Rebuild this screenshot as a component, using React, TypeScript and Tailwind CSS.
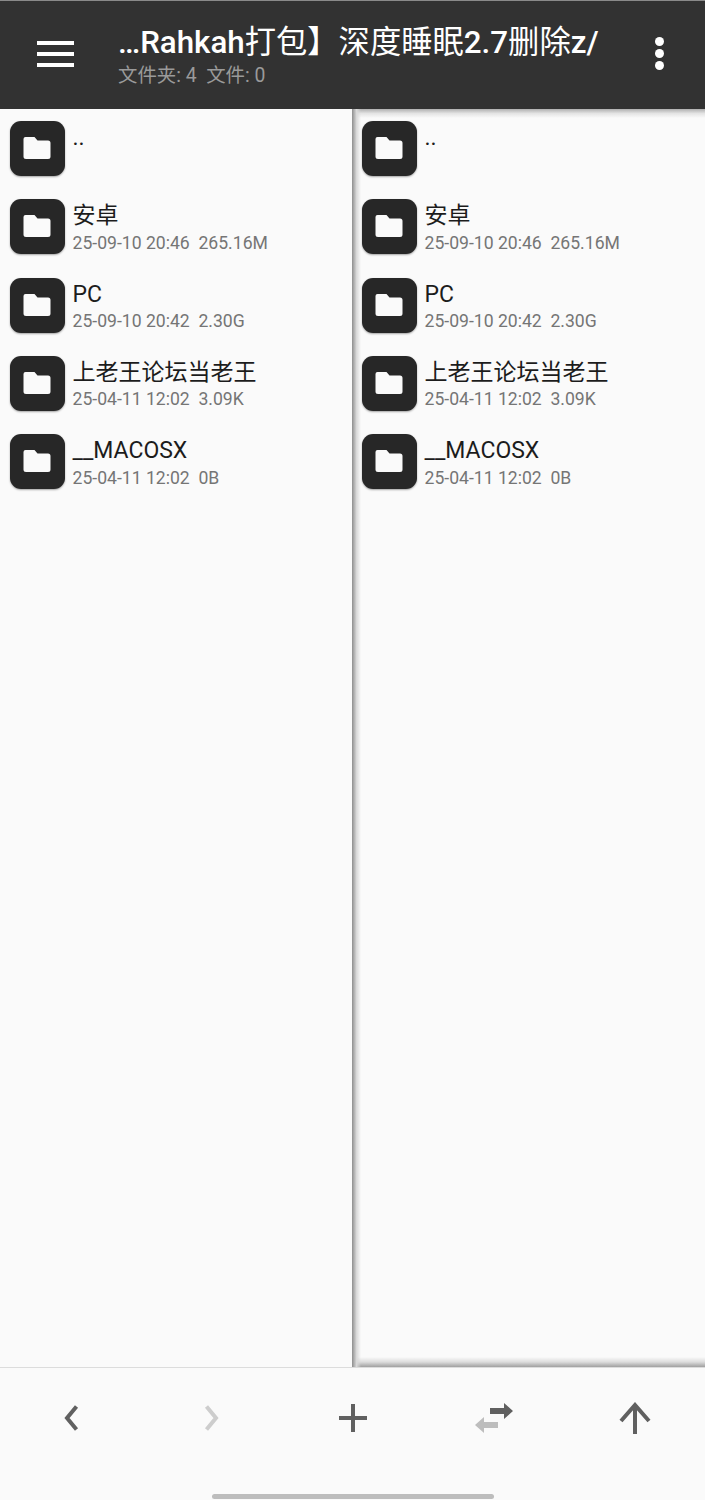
const ROWS = [
  { name: '..', meta: '' },
  { name: '安卓', meta: '25-09-10 20:46  265.16M' },
  { name: 'PC', meta: '25-09-10 20:42  2.30G' },
  { name: '上老王论坛当老王', meta: '25-04-11 12:02  3.09K' },
  { name: '__MACOSX', meta: '25-04-11 12:02  0B' },
]

const FONT = "font-['Roboto','Noto_Sans_CJK_SC',sans-serif]"

function FolderIcon() {
  return (
    <div className="w-[55px] h-[55px] shrink-0 rounded-[11px] bg-[#272727] shadow-[0_1px_2px_rgba(0,0,0,0.35)] flex items-center justify-center">
      <svg className="-ml-[1px] -mt-[1px]" width="28" height="24" viewBox="0 0 28 24" fill="#fafafa">
        <path d="M2.5 1h9l3 3.5H25a2.5 2.5 0 0 1 2.5 2.5v13.5A2.5 2.5 0 0 1 25 23H3a2.5 2.5 0 0 1-2.5-2.5V3a2 2 0 0 1 2-2z" />
      </svg>
    </div>
  )
}

function FileList() {
  return (
    <div className="pt-3 pl-[10px] flex flex-col gap-[23.3px]">
      {ROWS.map(r => (
        <div key={r.name} className="flex gap-[7.5px] h-[55px]">
          <FolderIcon />
          <div className="min-w-0 flex-1">
            <p className="text-[23px] leading-[27px] mt-[3px] text-[#1c1c1c] whitespace-nowrap">{r.name}</p>
            {r.meta && <p className="text-[17.6px] leading-[20px] mt-[3.5px] text-[#757575] whitespace-pre">{r.meta}</p>}
          </div>
        </div>
      ))}
    </div>
  )
}

export default function App() {
  return (
    <div className={`${FONT} w-[705px] h-[1500px] flex flex-col bg-[#fafafa] overflow-hidden`}>
      <header className="h-[109px] shrink-0 bg-[#323232] border-t border-[#8a8a8a] flex items-center">
        <div className="w-[118px] shrink-0 pl-[36.5px] flex flex-col gap-[7px] mt-[-3px]">
          <span className="block w-[37px] h-[4px] bg-white" />
          <span className="block w-[37px] h-[4px] bg-white" />
          <span className="block w-[37px] h-[4px] bg-white" />
        </div>
        <div className="flex-1 min-w-0 mt-[3px]">
          <p className="text-[31.3px] leading-[36px] text-white whitespace-nowrap">
            <span className="font-medium">…Rahkah</span>打包】深度睡眠<span className="font-medium">2.7</span>删除<span className="font-medium">z/</span>
          </p>
          <p className="text-[19.4px] leading-[24px] mt-[3px] text-[#9a9a9a] whitespace-pre">文件夹: 4  文件: 0</p>
        </div>
        <div className="w-[94px] shrink-0 pl-[2px] flex flex-col items-center gap-[2.7px] mt-[-3px]">
          <span className="block w-[9px] h-[9px] rounded-full bg-white" />
          <span className="block w-[9px] h-[9px] rounded-full bg-white" />
          <span className="block w-[9px] h-[9px] rounded-full bg-white" />
        </div>
      </header>

      <main className="h-[1258px] shrink-0 flex">
        <div className="w-[352px] shrink-0">
          <FileList />
        </div>
        <div className="flex-1 relative">
          <div className="absolute inset-x-0 top-0 h-[9px] bg-gradient-to-b from-[#b0b0b0] via-[#e4e4e4] to-transparent" />
          <div className="absolute inset-x-0 bottom-0 h-[10px] bg-gradient-to-t from-[#a0a0a0] via-[#dcdcdc] to-transparent" />
          <div className="absolute inset-y-0 left-0 w-[9px] bg-gradient-to-r from-[#8e8e8e] via-[#d8d8d8] to-transparent" />
          <FileList />
        </div>
      </main>

      <footer className="flex-1 border-t border-[#dcdcdc] relative">
        <div className="h-[100px] grid grid-cols-5 items-center">
          <div className="flex justify-center">
            <svg width="16" height="26" viewBox="0 0 16 26" fill="none" stroke="#606060" strokeWidth="4"><path d="M13.5 1.5 4 13l9.5 11.5" /></svg>
          </div>
          <div className="flex justify-center">
            <svg width="16" height="26" viewBox="0 0 16 26" fill="none" stroke="#cdcdcd" strokeWidth="4"><path d="M2.5 1.5 12 13 2.5 24.5" /></svg>
          </div>
          <div className="flex justify-center">
            <svg width="28" height="28" viewBox="0 0 28 28" fill="none" stroke="#606060" strokeWidth="4"><path d="M14 0v28M0 14h28" /></svg>
          </div>
          <div className="flex justify-center">
            <svg width="40" height="32" viewBox="0 0 40 32">
              <path d="M16 6h14V1l9 8-9 8v-5H16z" fill="#606060" />
              <path d="M24 20H10v-5l-9 8 9 8v-5h14z" fill="#bdbdbd" />
            </svg>
          </div>
          <div className="flex justify-center">
            <svg width="32" height="32" viewBox="0 0 32 32" fill="none" stroke="#606060" strokeWidth="4"><path d="M16 32V3M2 19 16 3l14 16" /></svg>
          </div>
        </div>
        <div className="absolute bottom-[1px] left-[212px] w-[282px] h-[5px] rounded-full bg-[#bdbdbd]" />
      </footer>
    </div>
  )
}
